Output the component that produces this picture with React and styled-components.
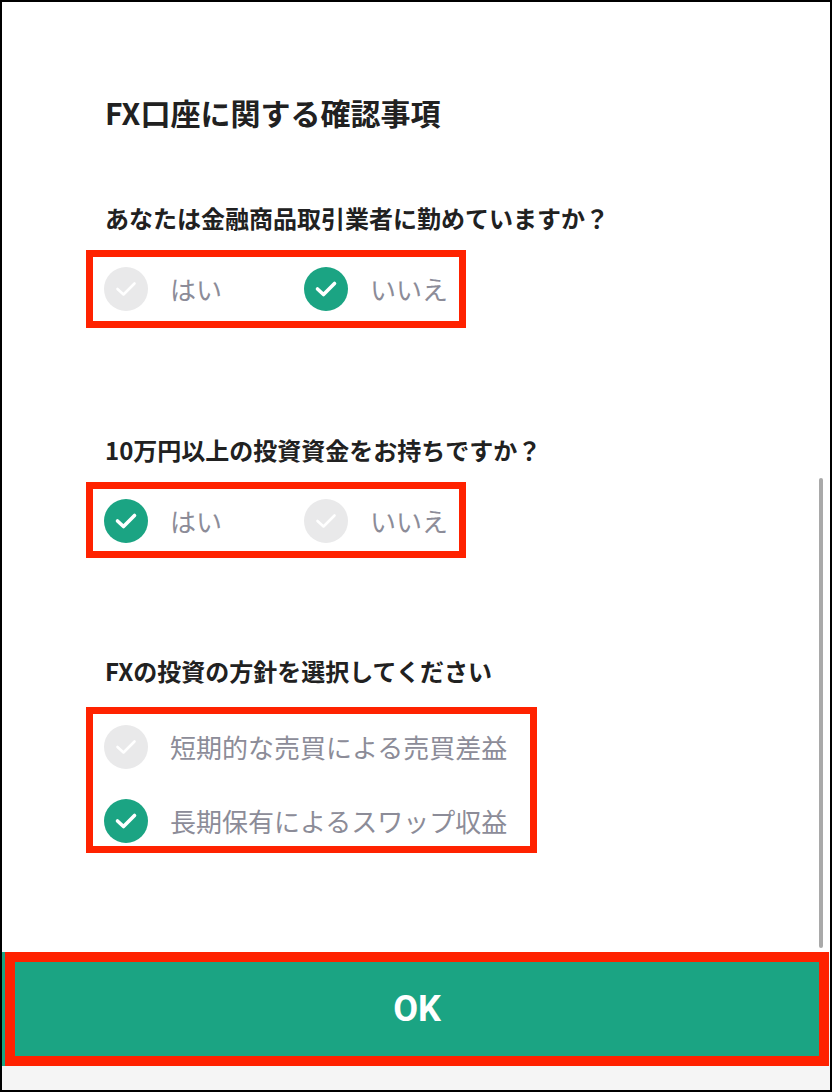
import React from "react";
import styled, { createGlobalStyle } from "styled-components";

const GlobalStyle = createGlobalStyle`
  html, body {
    margin: 0;
    padding: 0;
    background: #ffffff;
  }
  * {
    box-sizing: border-box;
  }
`;

const color = {
  green: "#1ba483",
  red: "#ff2200",
  off: "#e9e9ea",
  ink: "#212121",
  label: "#8c8c98",
};

const Frame = styled.div`
  width: 832px;
  height: 1092px;
  border: 2px solid #000;
  display: flex;
  flex-direction: column;
  font-family: "Noto Sans CJK JP", "Noto Sans", sans-serif;
  background: #fff;
`;

const Body = styled.div`
  position: relative;
  flex: 1;
  padding: 90px 0 0 103px;
  display: flex;
  flex-direction: column;
  align-items: flex-start;
`;

const Scrollbar = styled.div`
  position: absolute;
  right: 7px;
  top: 476px;
  bottom: 4px;
  width: 4px;
  border-radius: 2px;
  background: #a9a9a9;
`;

const Title = styled.h1`
  margin: 0;
  font-size: 30px;
  line-height: 40px;
  font-weight: 700;
  color: ${color.ink};
`;

const Question = styled.h2`
  margin: ${(p) => p.$top}px 0 0;
  font-size: 24px;
  line-height: 32px;
  font-weight: 700;
  color: ${color.ink};
`;

const Highlight = styled.div`
  margin: ${(p) => p.$top}px 0 0 -19px;
  border: 7px solid ${color.red};
  padding: ${(p) => p.$pad};
  display: flex;
  flex-direction: ${(p) => (p.$column ? "column" : "row")};
  gap: ${(p) => p.$gap}px;
`;

const Option = styled.div`
  display: flex;
  align-items: center;
  gap: 22px;
  height: 44px;
`;

const Circle = styled.span`
  width: 44px;
  height: 44px;
  border-radius: 50%;
  background: ${(p) => (p.$on ? color.green : color.off)};
  display: flex;
  align-items: center;
  justify-content: center;
  flex-shrink: 0;
`;

const Label = styled.span`
  font-size: 26px;
  line-height: 44px;
  color: ${color.label};
  white-space: nowrap;
`;

const Footer = styled.div`
  background: #f5f5f5;
  padding-bottom: 27px;
`;

const ButtonBack = styled.div`
  background: ${color.green};
  margin: 3px 1px 0 0;
`;

const RedFrame = styled.div`
  margin: -3px 0 -3px 3px;
  border: 10px solid ${color.red};
`;

const OkButton = styled.button`
  display: block;
  width: 100%;
  height: 94px;
  border: none;
  background: ${color.green};
  color: #fff;
  font-family: Roboto, "Noto Sans", sans-serif;
  font-size: 36px;
  font-weight: 700;
  cursor: pointer;
`;

const Check = ({ on }) => (
  <svg width="44" height="44" viewBox="0 0 44 44">
    <path
      d="M13.5 22 L19.5 27.5 L30.5 16.5"
      fill="none"
      stroke="#fff"
      strokeWidth={on ? 3.6 : 2.6}
      strokeLinecap="round"
      strokeLinejoin="round"
    />
  </svg>
);

const Radio = ({ on, label, width }) => (
  <Option style={width ? { width } : undefined}>
    <Circle $on={on}>
      <Check on={on} />
    </Circle>
    <Label>{label}</Label>
  </Option>
);

const App = () => {
  return (
    <>
      <GlobalStyle />
      <Frame>
        <Body>
          <Title>FX口座に関する確認事項</Title>

          <Question $top={70}>あなたは金融商品取引業者に勤めていますか？</Question>
          <Highlight $top={16} $pad="10px 11px" $gap={0}>
            <Radio label="はい" width={200} />
            <Radio on label="いいえ" />
          </Highlight>

          <Question $top={106}>10万円以上の投資資金をお持ちですか？</Question>
          <Highlight $top={16} $pad="10px 11px 8px" $gap={0}>
            <Radio on label="はい" width={200} />
            <Radio label="いいえ" />
          </Highlight>

          <Question $top={97}>FXの投資の方針を選択してください</Question>
          <Highlight $top={20} $pad="11px 23px 3px 11px" $gap={30} $column>
            <Radio label="短期的な売買による売買差益" />
            <Radio on label="長期保有によるスワップ収益" />
          </Highlight>

          <Scrollbar />
        </Body>

        <Footer>
          <ButtonBack>
            <RedFrame>
              <OkButton>OK</OkButton>
            </RedFrame>
          </ButtonBack>
        </Footer>
      </Frame>
    </>
  );
};

export default App;
